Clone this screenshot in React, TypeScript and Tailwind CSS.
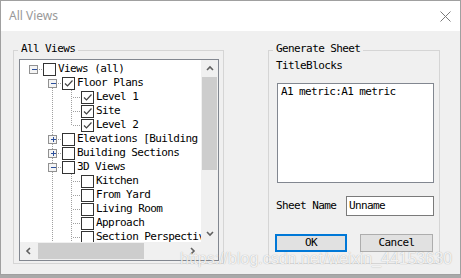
import React from "react";

type Row = {
  label: string;
  level: number;
  exp?: "+" | "-";
  checked?: boolean;
  up?: boolean;
  down?: boolean;
  last?: boolean;
  anc?: number[];
};

const rows: Row[] = [
  { label: "Views (all)", level: 0, exp: "-" },
  { label: "Floor Plans", level: 1, exp: "-", checked: true, down: true },
  { label: "Level 1", level: 2, checked: true, anc: [1] },
  { label: "Site", level: 2, checked: true, anc: [1] },
  { label: "Level 2", level: 2, checked: true, last: true, anc: [1] },
  { label: "Elevations [Building Elevation]", level: 1, exp: "+", up: true, down: true },
  { label: "Building Sections", level: 1, exp: "+", up: true, down: true },
  { label: "3D Views", level: 1, exp: "-", up: true, down: true },
  { label: "Kitchen", level: 2, anc: [1] },
  { label: "From Yard", level: 2, anc: [1] },
  { label: "Living Room", level: 2, anc: [1] },
  { label: "Approach", level: 2, anc: [1] },
  { label: "Section Perspective", level: 2, anc: [1] },
];

const dot = { stroke: "#a0a0a0", strokeDasharray: "1 1", shapeRendering: "crispEdges" as const };

const Checkbox = ({ checked }: { checked?: boolean }) => (
  <div className="w-[13px] h-[13px] shrink-0 border border-[#333] bg-white">
    {checked && (
      <svg width="11" height="11" viewBox="0 0 11 11">
        <polyline points="2,5.5 4.5,8 9.5,2.5" fill="none" stroke="#444" strokeWidth="1.2" />
      </svg>
    )}
  </div>
);

const TreeRow = ({ row }: { row: Row }) => {
  const gw = 23 + 19 * row.level;
  const lx = 13 + 19 * row.level + 0.5;
  return (
    <div className="flex h-[14px] items-center whitespace-nowrap">
      <svg width={gw} height="14" className="shrink-0">
        {(row.anc || []).map((a) => (
          <line key={a} x1={13 + 19 * a + 0.5} y1="0" x2={13 + 19 * a + 0.5} y2="14" {...dot} />
        ))}
        {row.exp ? (
          <>
            {row.up && <line x1={lx} y1="0" x2={lx} y2="3" {...dot} />}
            {row.down && <line x1={lx} y1="12" x2={lx} y2="14" {...dot} />}
            <line x1={lx + 5} y1="7.5" x2={gw} y2="7.5" {...dot} />
            <rect x={lx - 4} y="3.5" width="8" height="8" fill="#f4f4f4" stroke="#919191" shapeRendering="crispEdges" />
            <line x1={lx - 2} y1="7.5" x2={lx + 3} y2="7.5" stroke="#2b4f9c" shapeRendering="crispEdges" />
            {row.exp === "+" && (
              <line x1={lx + 0.5} y1="5" x2={lx + 0.5} y2="10" stroke="#2b4f9c" shapeRendering="crispEdges" />
            )}
          </>
        ) : (
          <>
            <line x1={lx} y1="0" x2={lx} y2={row.last ? 8 : 14} {...dot} />
            <line x1={lx + 1} y1="7.5" x2={gw} y2="7.5" {...dot} />
          </>
        )}
      </svg>
      <Checkbox checked={row.checked} />
      <span className="ml-[2px] text-black">{row.label}</span>
    </div>
  );
};

const Chevron = ({ dir }: { dir: "up" | "down" | "left" | "right" }) => {
  const pts = {
    up: "1,5 4,2 7,5",
    down: "1,2 4,5 7,2",
    left: "5,1 2,4 5,7",
    right: "2,1 5,4 2,7",
  }[dir];
  return (
    <svg width="8" height="8" viewBox="0 0 8 8">
      <polyline points={pts} fill="none" stroke="#606060" strokeWidth="1.6" />
    </svg>
  );
};

const GroupLabel = ({ text }: { text: string }) => (
  <span className="absolute left-[4px] top-[-9px] h-[14px] bg-[#f0f0f0] px-[3px] leading-[14px] text-black">
    {text}
  </span>
);

export default function App() {
  return (
    <div className="relative w-[461px] h-[278px] overflow-hidden bg-[#a9a9a9]">
      <div className="flex h-[275px] flex-col border border-[#a0a0a0] bg-[#f0f0f0]">
        <div className="flex h-[30px] items-center justify-between bg-white pl-[8px] pr-[9px]">
          <span className="font-['Noto_Sans',sans-serif] text-[12px] text-[#999]">All Views</span>
          <svg width="11" height="11" viewBox="0 0 11 11">
            <path d="M0.5 0.5 L10.5 10.5 M10.5 0.5 L0.5 10.5" stroke="#7a7a7a" strokeWidth="1" />
          </svg>
        </div>

        <div className="flex font-['DejaVu_Sans_Mono','Liberation_Mono',monospace] text-[11px] leading-[14px] tracking-[-0.6px]">
          {/* left group */}
          <div className="relative ml-[12px] mt-[19px] h-[214px] w-[211px] border border-[#d5d5d5] pl-[5px] pt-[8px]">
            <GroupLabel text="All Views" />
            <div className="flex h-[202px] w-[200px] flex-col border border-[#828790] bg-white">
              <div className="flex h-[182px]">
                <div className="flex-1 overflow-hidden pt-[2px]">
                  {rows.map((r) => (
                    <TreeRow key={r.label} row={r} />
                  ))}
                </div>
                <div className="flex w-[17px] flex-col bg-[#f0f0f0]">
                  <div className="flex h-[17px] items-center justify-center">
                    <Chevron dir="up" />
                  </div>
                  <div className="mx-[1px] h-[93px] bg-[#cdcdcd]" />
                  <div className="flex-1" />
                  <div className="flex h-[17px] items-center justify-center">
                    <Chevron dir="down" />
                  </div>
                </div>
              </div>
              <div className="flex h-[18px] bg-[#f0f0f0]">
                <div className="flex w-[17px] items-center justify-center">
                  <Chevron dir="left" />
                </div>
                <div className="my-[1px] ml-[1px] w-[106px] bg-[#cdcdcd]" />
                <div className="flex-1" />
                <div className="flex w-[17px] items-center justify-center">
                  <Chevron dir="right" />
                </div>
                <div className="w-[17px] bg-[#f0f0f0]" />
              </div>
            </div>
          </div>

          {/* right group */}
          <div className="relative ml-[44px] mt-[19px] flex h-[214px] w-[172px] flex-col border border-[#d5d5d5] pl-[7px] pt-[8px]">
            <GroupLabel text="Generate Sheet" />
            <span className="h-[14px] text-black">TitleBlocks</span>
            <div className="ml-[1px] mt-[10px] h-[100px] w-[157px] border border-[#828790] bg-white px-[3px] pt-[1px] text-black">
              A1 metric:A1 metric
            </div>
            <div className="mt-[13px] flex h-[20px] items-center">
              <span className="w-[70px] text-black">Sheet Name</span>
              <div className="flex h-[20px] w-[88px] items-center border border-[#7a7a7a] bg-white pl-[2px] text-black">
                Unname
              </div>
            </div>
            <div className="-ml-[1px] mt-[18px] flex gap-[13px]">
              <button className="flex h-[18px] w-[72px] items-center justify-center border-2 border-[#0078d7] bg-[#e1e1e1] text-black">
                OK
              </button>
              <button className="flex h-[18px] w-[73px] items-center justify-center border border-[#adadad] bg-[#e1e1e1] text-black">
                Cancel
              </button>
            </div>
          </div>
        </div>
      </div>

      <span className="absolute left-[180px] top-[247px] font-['Liberation_Sans',sans-serif] text-[16px] text-white/85 [text-shadow:0_0_1px_rgba(0,0,0,0.35)]">
        https://blog.csdn.net/weixin_44153630
      </span>
    </div>
  );
}
